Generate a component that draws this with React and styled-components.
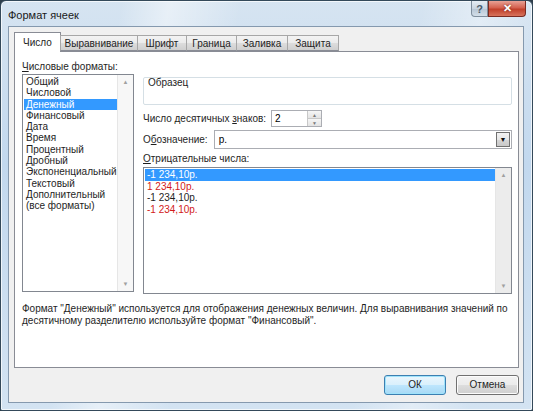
import React from 'react';
import styled, { createGlobalStyle } from 'styled-components';

const GlobalStyle = createGlobalStyle`
  body {
    margin: 0;
    background: #2f3f4c;
    font-family: "Liberation Sans", Arial, sans-serif;
  }
`;

const Window = styled.div`
  width: 533px;
  height: 411px;
  box-sizing: border-box;
  border: 1px solid #34495a;
  border-radius: 6px 6px 2px 2px;
  background:
    linear-gradient(100deg, rgba(255,255,255,0) 20%, rgba(255,255,255,0.45) 28%, rgba(255,255,255,0) 40%, rgba(255,255,255,0) 70%, rgba(255,255,255,0.35) 80%, rgba(255,255,255,0) 90%),
    linear-gradient(180deg, #d6e4f1 0%, #c2d8ee 40%, #d3e3f2 100%);
  display: flex;
  flex-direction: column;
  box-shadow: inset 0 0 0 1px rgba(255,255,255,0.7);
`;

const TitleBar = styled.div`
  height: 25px;
  display: flex;
  align-items: flex-start;
  justify-content: space-between;
  padding-left: 7px;
`;

const Title = styled.div`
  font-size: 11px;
  color: #1a1a1a;
  margin-top: 8px;
`;

const CaptionButtons = styled.div`
  display: flex;
  margin-right: 6px;
`;

const CaptionButton = styled.div`
  width: ${({ wide }) => (wide ? '38px' : '17px')};
  height: 16px;
  box-sizing: border-box;
  display: flex;
  align-items: center;
  justify-content: center;
  font-size: 11px;
  font-weight: bold;
  color: ${({ red }) => (red ? '#fff' : '#4a5a6a')};
  border: 1px solid ${({ red }) => (red ? '#7a2b22' : '#7e8d9c')};
  border-top: none;
  border-radius: ${({ red }) => (red ? '0 0 4px 0' : '0 0 0 4px')};
  background: ${({ red }) =>
    red
      ? 'linear-gradient(180deg, #e8a195 0%, #d4614f 45%, #c1402b 55%, #d7735c 100%)'
      : 'linear-gradient(180deg, #e6edf4 0%, #c9d5e1 50%, #b8c7d6 55%, #d4dfe9 100%)'};
  text-shadow: ${({ red }) => (red ? '0 0 2px #6a1a10' : 'none')};
`;

const Client = styled.div`
  flex: 1;
  margin: 0 8px 7px 7px;
  background: #f0f0f0;
  border: 1px solid #8599ae;
  display: flex;
  flex-direction: column;
  padding: 5px 4px 0 5px;
`;

const TabRow = styled.div`
  display: flex;
  align-items: flex-end;
  height: 19px;
  position: relative;
  z-index: 1;
`;

const Tab = styled.div`
  width: ${({ w }) => w}px;
  box-sizing: border-box;
  display: flex;
  align-items: center;
  justify-content: center;
  font-size: 10px;
  color: #1e1e1e;
  border: 1px solid ${({ active }) => (active ? '#898c95' : '#a7a7a7')};
  border-bottom: ${({ active }) => (active ? 'none' : '1px solid #898c95')};
  margin-left: ${({ active }) => (active ? '0' : '-1px')};
  margin-bottom: ${({ active }) => (active ? '-1px' : '0')};
  height: ${({ active }) => (active ? '20px' : '16px')};
  background: ${({ active }) =>
    active ? '#ffffff' : 'linear-gradient(180deg, #f3f3f3 0%, #ebebeb 50%, #dddddd 51%, #cfcfcf 100%)'};
`;

const Panel = styled.div`
  height: 317px;
  box-sizing: border-box;
  background: #ffffff;
  border: 1px solid #898c95;
  padding: 8px 6px 0 7px;
  display: flex;
  flex-direction: column;
`;

const Columns = styled.div`
  display: flex;
  gap: 9px;
`;

const LeftCol = styled.div`
  width: 112px;
  display: flex;
  flex-direction: column;
`;

const RightCol = styled.div`
  flex: 1;
  display: flex;
  flex-direction: column;
  padding-top: 18px;
`;

const Label = styled.div`
  font-size: 10px;
  color: #1e1e1e;
  height: 14px;
  line-height: 14px;
  white-space: nowrap;
  u { text-decoration: underline; }
`;

const ListBox = styled.div`
  height: ${({ h }) => h}px;
  margin-top: ${({ mt }) => mt || 0}px;
  box-sizing: border-box;
  border: 1px solid #828790;
  background: #fff;
  display: flex;
`;

const Items = styled.div`
  flex: 1;
  padding: 1px 0 0 1px;
`;

const Item = styled.div`
  font-size: 10px;
  height: ${({ lh }) => lh || 11.3}px;
  line-height: ${({ lh }) => lh || 11.3}px;
  padding-left: 2px;
  white-space: nowrap;
  color: ${({ selected, tone }) => (selected ? '#ffffff' : tone === 'red' ? '#d21a1a' : '#1e1e1e')};
  background: ${({ selected }) => (selected ? '#3399ff' : 'transparent')};
`;

const ScrollBar = styled.div`
  width: 15px;
  background: ${({ shade }) => shade || '#f4f4f4'};
  border-left: 1px solid #e6e6e6;
  display: flex;
  flex-direction: column;
  justify-content: space-between;
  align-items: center;
  padding: 4px 0;
  font-size: 6px;
  color: #a0a0a0;
`;

const GroupBox = styled.div`
  height: 28px;
  box-sizing: border-box;
  border: 1px solid #d5dfe5;
  border-radius: 2px;
  padding: 0 4px;
  font-size: 10px;
  color: #1e1e1e;
  line-height: 10px;
  margin-top: -1px;
`;

const FieldRow = styled.div`
  display: flex;
  align-items: center;
  gap: ${({ gap }) => gap}px;
  margin-top: ${({ mt }) => mt}px;
`;

const SpinBox = styled.div`
  width: 51px;
  height: 17px;
  box-sizing: border-box;
  border: 1px solid #abadb3;
  display: flex;
  background: #fff;
`;

const SpinValue = styled.div`
  flex: 1;
  font-size: 10px;
  line-height: 15px;
  padding-left: 3px;
`;

const SpinButtons = styled.div`
  width: 13px;
  display: flex;
  flex-direction: column;
  border-left: 1px solid #c8c8c8;
`;

const SpinArrow = styled.div`
  flex: 1;
  font-size: 5px;
  color: #7a7a7a;
  display: flex;
  align-items: center;
  justify-content: center;
  background: linear-gradient(180deg, #f6f6f6, #e3e3e3);
  & + & { border-top: 1px solid #c8c8c8; }
`;

const Combo = styled.div`
  flex: 1;
  height: 19px;
  box-sizing: border-box;
  border: 1px solid #abadb3;
  display: flex;
  background: #fff;
`;

const ComboValue = styled.div`
  flex: 1;
  font-size: 10px;
  line-height: 17px;
  padding-left: 4px;
`;

const DropButton = styled.div`
  width: 14px;
  margin: 1px;
  box-sizing: border-box;
  border: 1px solid #707070;
  background: linear-gradient(180deg, #f2f2f2 0%, #e6e6e6 50%, #d6d6d6 51%, #c8c8c8 100%);
  display: flex;
  align-items: center;
  justify-content: center;
  font-size: 7px;
  color: #111;
`;

const Description = styled.div`
  margin-top: 9px;
  font-size: 10px;
  line-height: 12px;
  color: #1e1e1e;
`;

const Footer = styled.div`
  flex: 1;
  display: flex;
  justify-content: flex-end;
  align-items: center;
  gap: 10px;
  padding-bottom: 1px;
`;

const Button = styled.div`
  width: ${({ w }) => w}px;
  height: 20px;
  box-sizing: border-box;
  border: 1px solid ${({ primary }) => (primary ? '#3c7fb1' : '#707070')};
  border-radius: 3px;
  box-shadow: ${({ primary }) => (primary ? 'inset 0 0 0 1px #9fe3fb' : 'inset 0 0 0 1px #fcfcfc')};
  background: ${({ primary }) =>
    primary
      ? 'linear-gradient(180deg, #eaf6fd 0%, #d9f0fc 50%, #bee6fd 51%, #a7d9f5 100%)'
      : 'linear-gradient(180deg, #f2f2f2 0%, #ebebeb 50%, #dddddd 51%, #cfcfcf 100%)'};
  font-size: 10px;
  color: #1e1e1e;
  display: flex;
  align-items: center;
  justify-content: center;
`;

const tabs = [
  { name: 'Число', w: 47 },
  { name: 'Выравнивание', w: 78 },
  { name: 'Шрифт', w: 50 },
  { name: 'Граница', w: 51 },
  { name: 'Заливка', w: 52 },
  { name: 'Защита', w: 52 },
];

const formats = [
  'Общий', 'Числовой', 'Денежный', 'Финансовый', 'Дата', 'Время', 'Процентный',
  'Дробный', 'Экспоненциальный', 'Текстовый', 'Дополнительный', '(все форматы)',
];

const negatives = [
  { text: '-1 234,10р.', tone: 'black' },
  { text: '1 234,10р.', tone: 'red' },
  { text: '-1 234,10р.', tone: 'black' },
  { text: '-1 234,10р.', tone: 'red' },
];

export default function App() {
  return (
    <>
      <GlobalStyle />
      <Window>
        <TitleBar>
          <Title>Формат ячеек</Title>
          <CaptionButtons>
            <CaptionButton>?</CaptionButton>
            <CaptionButton wide red>✕</CaptionButton>
          </CaptionButtons>
        </TitleBar>
        <Client>
          <TabRow>
            {tabs.map((t, i) => (
              <Tab key={t.name} w={t.w} active={i === 0}>{t.name}</Tab>
            ))}
          </TabRow>
          <Panel>
            <Columns>
              <LeftCol>
                <Label><u>Ч</u>исловые форматы:</Label>
                <ListBox h={218}>
                  <Items>
                    {formats.map((f, i) => (
                      <Item key={f} selected={i === 2}>{f}</Item>
                    ))}
                  </Items>
                  <ScrollBar shade="#f7f7f7">
                    <span>▲</span>
                    <span>▼</span>
                  </ScrollBar>
                </ListBox>
              </LeftCol>
              <RightCol>
                <GroupBox>Образец</GroupBox>
                <FieldRow gap={5} mt={5}>
                  <Label>Число десятичных <u>з</u>наков:</Label>
                  <SpinBox>
                    <SpinValue>2</SpinValue>
                    <SpinButtons>
                      <SpinArrow>▲</SpinArrow>
                      <SpinArrow>▼</SpinArrow>
                    </SpinButtons>
                  </SpinBox>
                </FieldRow>
                <FieldRow gap={6} mt={3}>
                  <Label>О<u>б</u>означение:</Label>
                  <Combo>
                    <ComboValue>р.</ComboValue>
                    <DropButton>▼</DropButton>
                  </Combo>
                </FieldRow>
                <FieldRow gap={0} mt={3}>
                  <Label><u>О</u>трицательные числа:</Label>
                </FieldRow>
                <ListBox h={127} mt={1}>
                  <Items>
                    {negatives.map((n, i) => (
                      <Item key={i} lh={11.5} selected={i === 0} tone={n.tone}>{n.text}</Item>
                    ))}
                  </Items>
                  <ScrollBar shade="#ececec">
                    <span>▲</span>
                    <span>▼</span>
                  </ScrollBar>
                </ListBox>
              </RightCol>
            </Columns>
            <Description>
              Формат "Денежный" используется для отображения денежных величин. Для выравнивания значений по
              <br />
              десятичному разделителю используйте формат "Финансовый".
            </Description>
          </Panel>
          <Footer>
            <Button primary w={62}>ОК</Button>
            <Button w={63}>Отмена</Button>
          </Footer>
        </Client>
      </Window>
    </>
  );
}
